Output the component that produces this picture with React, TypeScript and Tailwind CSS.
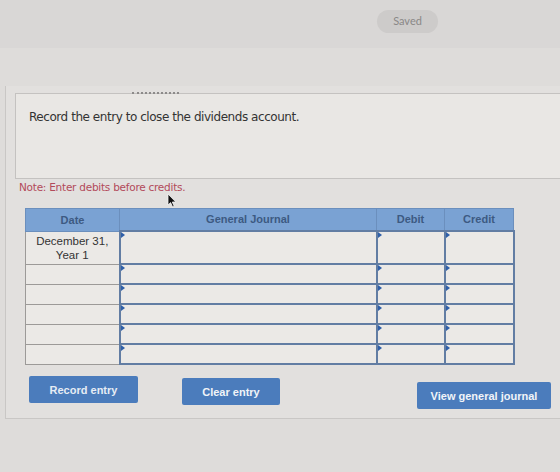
import React from "react";

const rows = [0, 1, 2, 3, 4, 5];

function Marker() {
  return (
    <span className="absolute left-0 top-0 h-0 w-0 border-y-[3px] border-l-[4px] border-y-transparent border-l-[#2f5fa8]" />
  );
}

function InputCell() {
  return (
    <td className="relative border-2 border-[#627da3] bg-[#ebe9e6] p-0">
      <Marker />
    </td>
  );
}

function Cursor() {
  return (
    <svg
      className="pointer-events-none absolute left-[167px] top-[193px]"
      width="10"
      height="15"
      viewBox="0 0 10 15"
    >
      <path
        d="M1 1 L1 12 L3.6 9.6 L5.6 14 L7.2 13.3 L5.3 9 L8.8 9 Z"
        fill="#111"
        stroke="#f4f4f4"
        strokeWidth="0.8"
        strokeLinejoin="round"
      />
    </svg>
  );
}

export default function App() {
  return (
    <div className="relative h-[472px] w-[560px] overflow-hidden bg-[#dedcda] font-['Liberation_Sans',Arial,sans-serif]">
      {/* status strip */}
      <div className="flex h-[48px] justify-end bg-[#d9d7d6] pr-[122px] pt-[10px]">
        <div className="flex h-[23px] w-[61px] items-center justify-center rounded-full bg-[#cdcbca] font-['Lato',sans-serif] text-[11px] text-[#8a8887]">
          Saved
        </div>
      </div>

      {/* question panel */}
      <div className="ml-[5px] mt-[38px] border-b border-l border-[#c9c7c5] bg-[#e2e0de] pb-[9px] pt-[7px]">
        <div className="relative ml-[9px] h-[86px] border border-r-0 border-[#c4c2c0] bg-[#e9e7e4] pl-[13px] pt-[14px]">
          <div className="absolute left-[116px] top-[-2px] h-[3px] w-[47px] border-t-[2px] border-dotted border-[#8d8b8a]" />
          <p className="font-['DejaVu_Sans',Verdana,sans-serif] text-[12px] tracking-[-0.45px] text-[#333]">
            Record the entry to close the dividends account.
          </p>
        </div>

        <p className="ml-[13px] mt-[1px] font-['DejaVu_Sans',Verdana,sans-serif] text-[10.5px] tracking-[-0.25px] text-[#b24a5a]">
          Note: Enter debits before credits.
        </p>

        <table className="ml-[19px] mt-[12px] w-[488px] table-fixed border-collapse">
          <colgroup>
            <col className="w-[94px]" />
            <col className="w-[257px]" />
            <col className="w-[68px]" />
            <col className="w-[69px]" />
          </colgroup>
          <thead>
            <tr className="h-[23px] bg-[#7aa2d3] text-[11px] font-bold text-[#3d5a82]">
              <th className="border border-[#6b8fbd] font-bold">Date</th>
              <th className="border border-[#6b8fbd] font-bold">General Journal</th>
              <th className="border border-[#6b8fbd] font-bold">Debit</th>
              <th className="border border-[#6b8fbd] font-bold">Credit</th>
            </tr>
          </thead>
          <tbody>
            {rows.map((r) => (
              <tr key={r} className={r === 0 ? "h-[33px]" : "h-[20px]"}>
                <td className="border border-[#9c9a98] bg-[#ebe9e6] p-0 text-center align-top text-[11.5px] leading-[14px] text-[#333]">
                  {r === 0 ? (
                    <div className="pt-[2px]">
                      December 31,
                      <br />
                      Year 1
                    </div>
                  ) : null}
                </td>
                <InputCell />
                <InputCell />
                <InputCell />
              </tr>
            ))}
          </tbody>
        </table>

        <div className="mt-[11px] flex items-start pl-[23px] pr-[9px]">
          <button className="h-[27px] w-[109px] rounded-[2px] bg-[#4b7cbc] text-[11px] font-bold text-[#e6ecf4]">
            Record entry
          </button>
          <button className="ml-[44px] mt-[2px] h-[27px] w-[98px] rounded-[2px] bg-[#4b7cbc] text-[11px] font-bold text-[#f1f4f8]">
            Clear entry
          </button>
          <button className="ml-auto mt-[6px] h-[27px] w-[134px] rounded-[2px] bg-[#4b7cbc] text-[11px] font-bold text-[#f1f4f8]">
            View general journal
          </button>
        </div>
      </div>

      <Cursor />
    </div>
  );
}
